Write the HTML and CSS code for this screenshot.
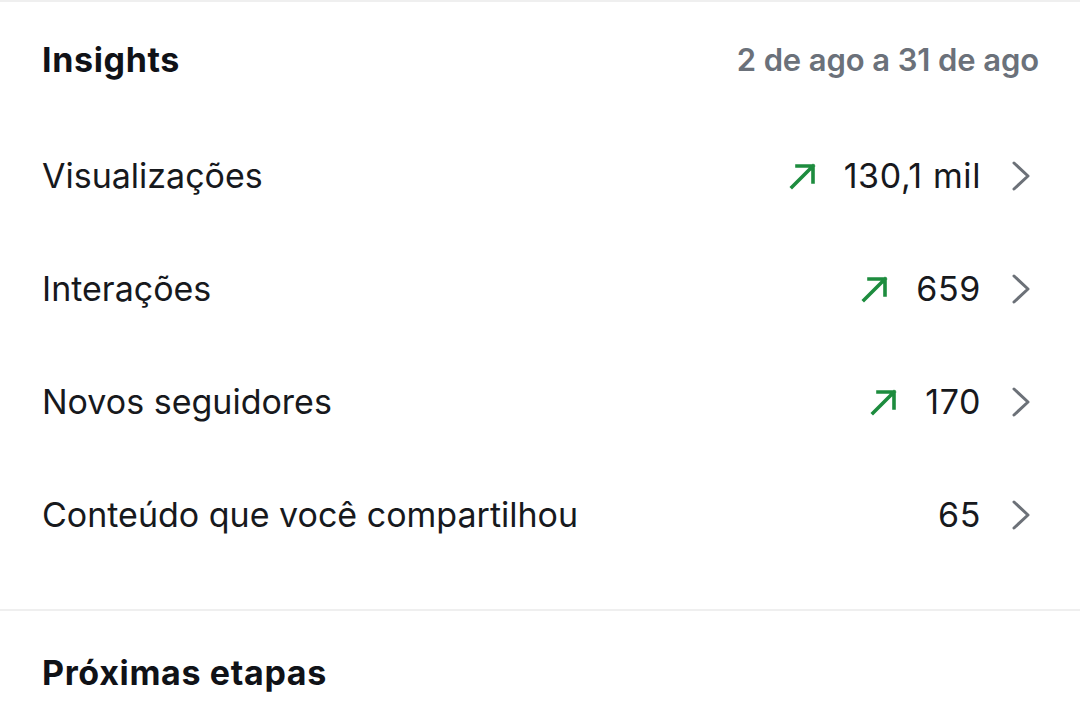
FILE: index.html
```html
<!DOCTYPE html>
<html lang="pt-BR">
<head>
<meta charset="utf-8">
<title>Insights</title>
<link rel="stylesheet" href="styles.css">
</head>
<body>
<div class="page">
  <section class="insights">
    <header class="insights-head">
      <h2 class="title">Insights</h2>
      <span class="range">2 de ago a 31 de ago</span>
    </header>
    <ul class="rows">
      <li class="row">
        <span class="label">Visualizações</span>
        <span class="meta">
          <svg class="trend" viewBox="0 0 28 28"><path d="M3 25 L24 4 M8 4 H24 V20"/></svg>
          <span class="value">130,1 mil</span>
          <svg class="chev" viewBox="0 0 20 32"><path d="M3 3 L17 16 L3 29"/></svg>
        </span>
      </li>
      <li class="row">
        <span class="label">Interações</span>
        <span class="meta">
          <svg class="trend" viewBox="0 0 28 28"><path d="M3 25 L24 4 M8 4 H24 V20"/></svg>
          <span class="value">659</span>
          <svg class="chev" viewBox="0 0 20 32"><path d="M3 3 L17 16 L3 29"/></svg>
        </span>
      </li>
      <li class="row">
        <span class="label">Novos seguidores</span>
        <span class="meta">
          <svg class="trend" viewBox="0 0 28 28"><path d="M3 25 L24 4 M8 4 H24 V20"/></svg>
          <span class="value">170</span>
          <svg class="chev" viewBox="0 0 20 32"><path d="M3 3 L17 16 L3 29"/></svg>
        </span>
      </li>
      <li class="row">
        <span class="label">Conteúdo que você compartilhou</span>
        <span class="meta">
          <span class="value">65</span>
          <svg class="chev" viewBox="0 0 20 32"><path d="M3 3 L17 16 L3 29"/></svg>
        </span>
      </li>
    </ul>
  </section>
  <section class="next">
    <h2 class="title">Próximas etapas</h2>
  </section>
</div>
</body>
</html>
```

FILE: styles.css
```css
html, body {
  margin: 0;
  padding: 0;
  background: #ffffff;
}
body {
  font-family: Inter, "Noto Sans", "Liberation Sans", sans-serif;
  color: #14161a;
  -webkit-font-smoothing: antialiased;
}
.page {
  width: 1080px;
  height: 720px;
  overflow: hidden;
  border-top: 2px solid #efefef;
  box-sizing: border-box;
}
.insights {
  padding: 0 42px 38px 42px;
  border-bottom: 2px solid #efefef;
}
.insights-head {
  display: flex;
  align-items: center;
  justify-content: space-between;
  height: 117px;
  padding-bottom: 2px;
  box-sizing: border-box;
}
.title {
  margin: 0;
  font-size: 34px;
  font-weight: 700;
  letter-spacing: 0.65px;
  color: #101217;
}
.range {
  font-size: 31px;
  font-weight: 600;
  letter-spacing: -0.1px;
  color: #6b717a;
  margin-right: -1px;
}
.rows {
  list-style: none;
  margin: 0;
  padding: 0;
}
.row {
  display: flex;
  align-items: center;
  justify-content: space-between;
  height: 113px;
}
.label {
  font-size: 34px;
  font-weight: 400;
  color: #17191d;
}
.meta {
  display: flex;
  align-items: center;
}
.value {
  font-size: 34px;
  font-weight: 400;
  letter-spacing: 0.6px;
  color: #17191d;
}
.trend {
  width: 28px;
  height: 28px;
  margin-right: 27px;
  fill: none;
  stroke: #1d8c3e;
  stroke-width: 3.6;
  stroke-linecap: square;
}
.chev {
  width: 20px;
  height: 32px;
  margin-left: 30px;
  margin-right: 7px;
  fill: none;
  stroke: #6c7178;
  stroke-width: 3;
  stroke-linecap: round;
  stroke-linejoin: round;
}
.next {
  padding: 41px 42px 0 42px;
}
```
